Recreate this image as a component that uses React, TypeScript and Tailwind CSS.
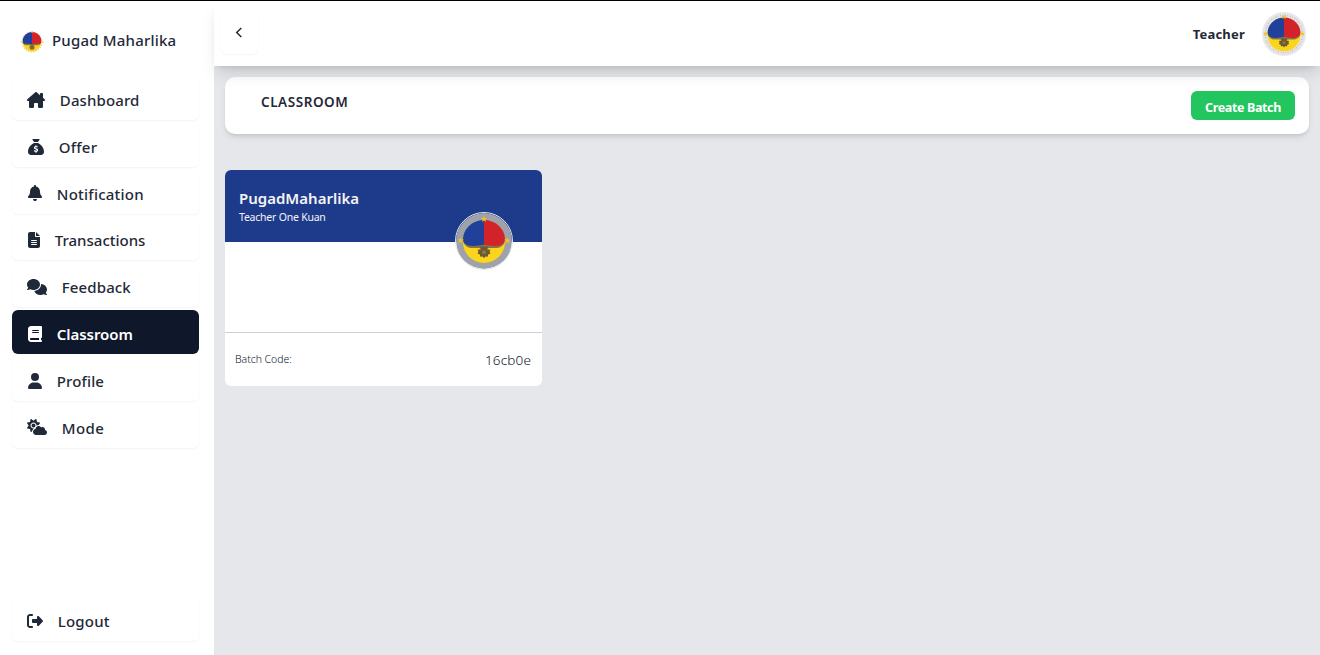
import React from "react";
import {
  FaHouseChimney,
  FaSackDollar,
  FaBell,
  FaFileLines,
  FaComments,
  FaBook,
  FaUser,
  FaCloudSun,
  FaRightFromBracket,
} from "react-icons/fa6";

type Item = { label: string; icon: React.ReactNode; tracking: string; active?: boolean };

const items: Item[] = [
  { label: "Dashboard", icon: <FaHouseChimney className="h-4 w-[18px]" />, tracking: "tracking-[0.12px]" },
  { label: "Offer", icon: <FaSackDollar className="ml-px h-4 w-4" />, tracking: "tracking-[0.2px]" },
  { label: "Notification", icon: <FaBell className="ml-px h-4 w-[14px]" />, tracking: "tracking-[0.23px]" },
  { label: "Transactions", icon: <FaFileLines className="ml-px h-4 w-3" />, tracking: "tracking-[0px]" },
  { label: "Feedback", icon: <FaComments className="h-4 w-5" />, tracking: "tracking-[0.12px]" },
  { label: "Classroom", icon: <FaBook className="ml-px h-4 w-[14px]" />, tracking: "tracking-[-0.05px]", active: true },
  { label: "Profile", icon: <FaUser className="ml-px h-4 w-[14px]" />, tracking: "tracking-[0.12px]" },
  { label: "Mode", icon: <FaCloudSun className="h-4 w-5" />, tracking: "tracking-[0.4px]" },
];

function Seal({ className, ring }: { className: string; ring: string }) {
  return (
    <svg viewBox="0 0 60 60" className={className}>
      <circle cx="30" cy="30" r="30" fill={ring} />
      <circle cx="30" cy="30" r="25.5" fill="none" stroke="#c9986f" strokeWidth="2.5" strokeDasharray="1.5 1.8 1 2.4" strokeOpacity=".5" />
      <circle cx="30" cy="31" r="22.5" fill="#fad51c" />
      <path d="M30 7.5C17 7.5 7.5 18 7.5 28c0 4 3 8 9 8l13.5-1z" fill="#21409a" />
      <path d="M30 7.5C43 7.5 52.5 18 52.5 28c0 4-3 8-9 8L30 35z" fill="#d2232a" />
      <path d="M8 31c3 4 7 5 14 4l8-1 8 1c7 1 11 0 14-4-1 4-5 6.5-10 6.5h-6l-3 .5h-6l-3-.5h-6c-5 0-9-2.500-10-6.500z" fill="#8b7347" />
      <path d="M25.500 36h9l-1 3 3.500.500-1 2 1 2-2.500 1-.500 2.500-2.500-.500-1.500 2-1.500-2-2.500.500-.500-2.500-2.500-1 1-2-1-2 3.500-.500z" fill="#6b5a35" />
      <circle cx="30" cy="42" r="2" fill="#8f7a3f" />
      <path d="M30 3l1 2.500h2.500l-2 1.600.800 2.600-2.300-1.600-2.300 1.600.800-2.600-2-1.600H29zM5 26l1 2.500h2.500l-2 1.600.800 2.600L5 31.100l-2.300 1.600.800-2.600-2-1.600H4zM55 26l1 2.500h2.500l-2 1.600.800 2.600-2.300-1.600-2.300 1.600.800-2.600-2-1.600H54z" fill="#f2c41b" />
    </svg>
  );
}

/* Small version of the seal: sunburst edge without the ring. */
function SunSeal({ className }: { className: string }) {
  return (
    <svg viewBox="0 0 24 24" className={className}>
      <circle cx="12" cy="12" r="10" fill="none" stroke="#e8cfb0" strokeWidth="1.2" strokeDasharray="1.2 1.4" />
      <circle cx="12" cy="12.500" r="9.200" fill="#fad51c" />
      <path d="M12 2C6.500 2 2.600 6.500 2.600 11c0 2.800 1.400 4 4.400 4h5z" fill="#21409a" />
      <path d="M12 2c5.500 0 9.400 4.500 9.400 9 0 2.800-1.400 4-4.400 4h-5z" fill="#d2232a" />
      <path d="M4 13.500l8 .8 8-.8-2 1.800H6z" fill="#8b7347" />
      <circle cx="12" cy="17.200" r="2.500" fill="#7d6a33" />
      <path d="M11.400 1h1.200v2h-1.200zM.5 11.400h2v1.200h-2zM21.500 11.400h2v1.200h-2z" fill="#f2c41b" />
    </svg>
  );
}

function NavItem({ item }: { item: Item }) {
  return (
    <a
      className={
        item.active
          ? "flex h-[43.7px] items-center gap-3.5 rounded-md bg-[#0f172a] pl-[15px] text-[15px] text-white font-semibold"
          : "flex h-[43.7px] items-center gap-3.5 rounded-md bg-white pl-[15px] text-[15px] text-[#1f2937] font-medium shadow-[0_1px_2px_0_rgba(0,0,0,0.05)]"
      }
    >
      <span className="flex shrink-0 pt-[3.4px]">{item.icon}</span>
      <span className={"pl-[0.8px] pt-[3.6px] leading-6 " + item.tracking}>{item.label}</span>
    </a>
  );
}

export default function App() {
  return (
    <div className="flex h-[655px] w-[1320px] overflow-hidden border-t border-black bg-[#e5e7eb] font-['Noto_Sans','Open_Sans',sans-serif]">
      <aside className="flex w-[214px] shrink-0 flex-col bg-white px-3 pb-3.5">
        <div className="flex h-[75.4px] items-center gap-2 pl-2 pt-1 text-[#1e293b]">
          <SunSeal className="mt-[3px] h-6 w-6" />
          <span className="whitespace-nowrap text-[15px] font-medium tracking-[0.2px]">Pugad Maharlika</span>
        </div>
        <nav className="flex w-[187px] flex-col gap-[3.1px]">
          {items.map((i) => (
            <NavItem key={i.label} item={i} />
          ))}
        </nav>
        <div className="mt-auto w-[187px]">
          <NavItem item={{ label: "Logout", icon: <FaRightFromBracket className="h-4 w-4" />, tracking: "tracking-[0.2px]" }} />
        </div>
      </aside>
      <div className="flex min-w-0 flex-1 flex-col">
        <header className="relative z-10 flex h-[65px] shrink-0 items-center justify-between bg-white pl-[7px] pr-[14px] shadow-[0_10px_15px_-3px_rgba(0,0,0,0.13),0_4px_6px_-4px_rgba(0,0,0,0.13)]">
          <button className="mb-[3px] flex h-[44px] w-[37px] items-center justify-center rounded-md shadow-[0_1px_2px_0_rgba(0,0,0,0.05)]">
            <svg viewBox="0 0 8 12" className="mr-px h-[11px] w-[8px]" fill="none" stroke="#1f2937" strokeWidth="1.6">
              <path d="M6.5 1 1.5 6l5 5" />
            </svg>
          </button>
          <div className="flex items-center gap-[17px]">
            <span className="pt-0.5 text-[13px] font-bold tracking-[0.2px] text-[#1f2937]">Teacher</span>
            <Seal className="h-11 w-11" ring="#e5e7eb" />
          </div>
        </header>
        <main className="flex flex-1 flex-col px-[11px] pt-[11px]">
          <section className="flex h-[57px] items-center justify-between rounded-[10px] bg-white pl-9 pr-3.5 shadow-[0_4px_6px_-1px_rgba(0,0,0,0.1),0_2px_4px_-2px_rgba(0,0,0,0.1)]">
            <h1 className="pb-1.5 text-[13.5px] font-semibold tracking-[0.55px] text-[#1f2937]">CLASSROOM</h1>
            <button className="flex h-[29px] w-[104px] items-center justify-center rounded-md bg-[#22c55e] pt-[5px] text-[12.5px] font-bold tracking-[-0.37px] text-white">
              Create Batch
            </button>
          </section>
          <article className="relative mt-9 flex h-[216px] w-[317px] flex-col overflow-hidden rounded-md bg-white">
            <div className="h-[72px] bg-[#1e3a8a] px-3.5 pt-[18px] text-[#f3f4f6]">
              <h2 className="text-[15px] font-semibold leading-5">PugadMaharlika</h2>
              <p className="pt-px text-[10.5px] leading-4 tracking-[-0.22px]">Teacher One Kuan</p>
            </div>
            <Seal className="absolute left-[230px] top-[41.5px] h-[58px] w-[58px] rounded-full border border-[#e5e7eb]" ring="#9ca3af" />
            <div className="flex-1" />
            <footer className="flex h-[54px] items-center justify-between border-t border-[#cbd0d8] px-[11px] text-[#0f172a]">
              <span className="-ml-px text-[10.5px] font-light tracking-[-0.05px]">Batch Code:</span>
              <span className="pt-0.5 text-[13.5px] font-light tracking-[0.15px]">16cb0e</span>
            </footer>
          </article>
        </main>
      </div>
    </div>
  );
}
